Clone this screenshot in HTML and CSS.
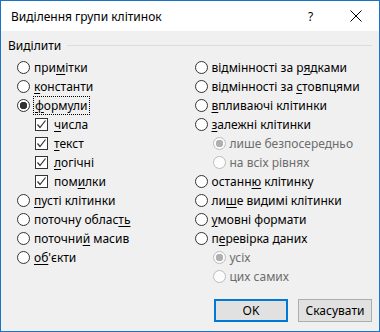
FILE: index.html
```html
<!DOCTYPE html>
<html lang="uk">
<head>
  <meta charset="UTF-8" />
  <title>Виділення групи клітинок</title>
  <link rel="stylesheet" href="styles.css">
</head>
<body>

<div class="dialog">
  <div class="titlebar">
    <span class="title">Виділення групи клітинок</span>
    <span class="help">?</span>
    <span class="close">
      <svg width="12" height="12" viewBox="0 0 12 12"><path d="M0.5 0.5 L11.5 11.5 M11.5 0.5 L0.5 11.5" stroke="#000" stroke-width="1" fill="none"/></svg>
    </span>
  </div>

  <div class="content">
    <div class="legend">
      <span>Виділити</span>
      <div class="rule"></div>
    </div>

    <div class="columns">
      <!-- ліва колонка -->
      <div class="col">
        <div class="opt"><span class="radio"></span><span>при<u>м</u>ітки</span></div>
        <div class="opt"><span class="radio"></span><span><u>к</u>онстанти</span></div>
        <div class="opt"><span class="radio on"></span><span class="focus"><u>ф</u>ормули</span></div>
        <div class="opt sub"><span class="check"><svg width="11" height="11" viewBox="0 0 11 11"><path d="M1.5 5.5 L4 8.5 L9.5 1.5" stroke="#333" stroke-width="1.2" fill="none"/></svg></span><span><u>ч</u>исла</span></div>
        <div class="opt sub"><span class="check"><svg width="11" height="11" viewBox="0 0 11 11"><path d="M1.5 5.5 L4 8.5 L9.5 1.5" stroke="#333" stroke-width="1.2" fill="none"/></svg></span><span><u>т</u>екст</span></div>
        <div class="opt sub"><span class="check"><svg width="11" height="11" viewBox="0 0 11 11"><path d="M1.5 5.5 L4 8.5 L9.5 1.5" stroke="#333" stroke-width="1.2" fill="none"/></svg></span><span><u>л</u>огічні</span></div>
        <div class="opt sub"><span class="check"><svg width="11" height="11" viewBox="0 0 11 11"><path d="M1.5 5.5 L4 8.5 L9.5 1.5" stroke="#333" stroke-width="1.2" fill="none"/></svg></span><span>пом<u>и</u>лки</span></div>
        <div class="opt"><span class="radio"></span><span><u>п</u>усті клітинки</span></div>
        <div class="opt"><span class="radio"></span><span>поточну облас<u>ть</u></span></div>
        <div class="opt"><span class="radio"></span><span>поточни<u>й</u> масив</span></div>
        <div class="opt"><span class="radio"></span><span><u>об</u>'єкти</span></div>
      </div>

      <!-- права колонка -->
      <div class="col">
        <div class="opt"><span class="radio"></span><span>відмінності за р<u>я</u>дками</span></div>
        <div class="opt"><span class="radio"></span><span>відмінності за <u>с</u>товпцями</span></div>
        <div class="opt"><span class="radio"></span><span><u>в</u>пливаючі клітинки</span></div>
        <div class="opt"><span class="radio"></span><span><u>з</u>алежні клітинки</span></div>
        <div class="opt sub off"><span class="radio on"></span><span>лише безпосередньо</span></div>
        <div class="opt sub off"><span class="radio"></span><span>на всіх рівнях</span></div>
        <div class="opt"><span class="radio"></span><span>останн<u>ю</u> клітинку</span></div>
        <div class="opt"><span class="radio"></span><span>ли<u>ш</u>е видимі клітинки</span></div>
        <div class="opt"><span class="radio"></span><span><u>у</u>мовні формати</span></div>
        <div class="opt"><span class="radio"></span><span>п<u>е</u>ревірка даних</span></div>
        <div class="opt sub off"><span class="radio on"></span><span>усіх</span></div>
        <div class="opt sub off"><span class="radio"></span><span>цих самих</span></div>
      </div>
    </div>

    <div class="buttons">
      <button class="btn default">OK</button>
      <button class="btn">Скасувати</button>
    </div>
  </div>
</div>

</body>
</html>
```

FILE: styles.css
```css
html, body {
  margin: 0;
  padding: 0;
  background: #f0f0f0;
  font-family: "Noto Sans", "Open Sans", sans-serif;
  font-size: 12px;
  color: #000;
}

.dialog {
  width: 380px;
  height: 332px;
  box-sizing: border-box;
  border: 1px solid #1c73c5;
  background: #f0f0f0;
  display: flex;
  flex-direction: column;
}

.titlebar {
  height: 30px;
  background: #fff;
  display: flex;
  align-items: center;
  padding-left: 10px;
}

.title {
  flex: 1;
}

.help {
  width: 12px;
  margin-right: 30px;
}

.close {
  width: 12px;
  height: 12px;
  margin-right: 17px;
  display: flex;
}

.content {
  flex: 1;
  display: flex;
  flex-direction: column;
  padding: 6px 7px 9px 7px;
}

.legend {
  display: flex;
  align-items: center;
  height: 16px;
}

.rule {
  flex: 1;
  height: 1px;
  background: #dcdcdc;
  margin-left: 6px;
}

.columns {
  display: flex;
  padding-left: 9px;
  margin-top: 5px;
}

.col {
  width: 182px;
  display: flex;
  flex-direction: column;
}

.opt {
  height: 19px;
  display: flex;
  align-items: center;
  white-space: nowrap;
}

.opt u {
  text-decoration-thickness: 1px;
  text-underline-offset: 2px;
}

.opt.sub {
  padding-left: 18px;
}

.opt.off {
  color: #6d6d6d;
}

.radio {
  width: 13px;
  height: 13px;
  box-sizing: border-box;
  border: 1px solid #333;
  border-radius: 50%;
  background: #fff;
  margin-right: 4px;
  flex: none;
}

.radio.on {
  background: radial-gradient(circle, #333 3.5px, #fff 4px);
}

.off .radio {
  border-color: #bcbcbc;
  background: #fcfcfc;
}

.off .radio.on {
  background: radial-gradient(circle, #b0b0b0 3.5px, #fcfcfc 4px);
}

.check {
  width: 13px;
  height: 13px;
  box-sizing: border-box;
  border: 1px solid #333;
  background: #fff;
  margin-right: 6px;
  flex: none;
  display: flex;
  align-items: center;
  justify-content: center;
}

.focus {
  outline: 1px dotted #000;
  outline-offset: 0;
  padding: 0 1px;
}

.buttons {
  margin-top: auto;
  display: flex;
  justify-content: flex-end;
  gap: 10px;
}

.btn {
  width: 74px;
  height: 23px;
  box-sizing: border-box;
  border: 1px solid #adadad;
  background: #e1e1e1;
  font-family: "Noto Sans", "Open Sans", sans-serif;
  font-size: 12px;
  padding: 0;
  color: #000;
}

.btn.default {
  border: 2px solid #0078d7;
}
```
